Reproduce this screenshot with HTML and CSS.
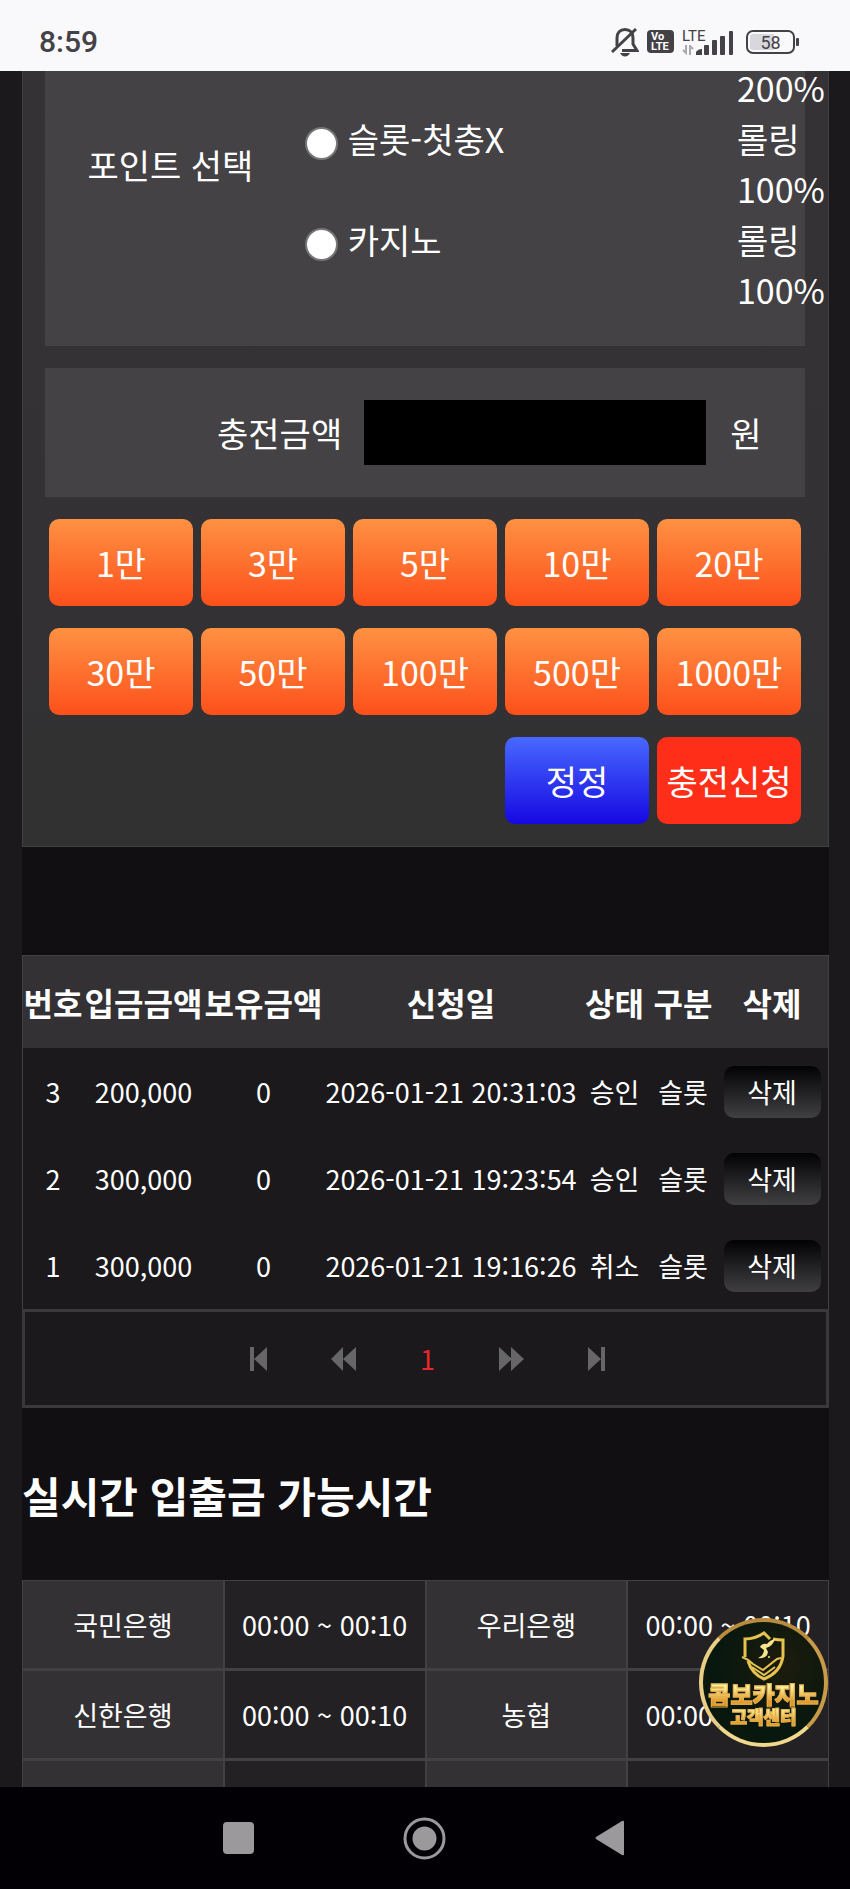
FILE: index.html
```
<!DOCTYPE html>
<html lang="ko">
<head>
    <meta charset="UTF-8">
    <meta name="viewport" content="width=device-width, initial-scale=1.0">
    <title>충전신청</title>
    <link rel="stylesheet" href="styles.css">
</head>
<body>
    <header class="status-bar">
        <div class="clock">8:59</div>
        <div class="status-icons">
            <svg class="icon-bell" width="28" height="30" viewBox="0 0 28 30" fill="none" stroke="#444246" stroke-width="3">
                <path d="M6 19V11C6 6 9 2.500 14 2.500S22 6 22 11V17L26 23.500H11"/>
                <path d="M1 25L25 2"/>
                <path d="M9 26H19Q17 29.500 14 29.500T9 26Z" fill="#444246" stroke="none"/>
            </svg>
            <div class="volte"><span>Vo</span><span>LTE</span></div>
            <div class="signal">
                <div class="signal-type">
                    <span>LTE</span>
                    <svg width="12" height="10" viewBox="0 0 12 10" fill="none" stroke="#aaa8ac" stroke-width="2">
                        <path d="M4 0V8L1 5M8 10V1L11 4"/>
                    </svg>
                </div>
                <svg width="38" height="24" viewBox="0 0 38 24" fill="#444246">
                    <path d="M0 24V21Q2 18 6 18V24Z"/>
                    <rect x="8" y="14" width="5" height="10" rx="1"/>
                    <rect x="16" y="9" width="5" height="15" rx="1"/>
                    <rect x="24" y="5" width="5" height="19" rx="1"/>
                    <rect x="33" y="0" width="4" height="24" rx="1"/>
                </svg>
            </div>
            <div class="battery"><span>58</span></div>
        </div>
    </header>

    <main>
        <div class="container">
            <form class="charge-form">
                <fieldset class="panel point-panel">
                    <div class="point-label">포인트 선택</div>
                    <div class="point-list">
                        <div class="point-row"><span class="rate">200%</span></div>
                        <div class="point-row">
                            <label><input type="radio" name="point">슬롯-첫충X</label>
                            <span class="rate">롤링 100%</span>
                        </div>
                        <div class="point-row">
                            <label><input type="radio" name="point">카지노</label>
                            <span class="rate">롤링 100%</span>
                        </div>
                    </div>
                </fieldset>

                <div class="panel amount-panel">
                    <label for="amount">충전금액</label>
                    <input type="text" id="amount" inputmode="numeric">
                    <span>원</span>
                </div>

                <div class="amount-buttons">
                    <button type="button" class="btn" data-amount="10000">1만</button>
                    <button type="button" class="btn" data-amount="30000">3만</button>
                    <button type="button" class="btn" data-amount="50000">5만</button>
                    <button type="button" class="btn" data-amount="100000">10만</button>
                    <button type="button" class="btn" data-amount="200000">20만</button>
                    <button type="button" class="btn" data-amount="300000">30만</button>
                    <button type="button" class="btn" data-amount="500000">50만</button>
                    <button type="button" class="btn" data-amount="1000000">100만</button>
                    <button type="button" class="btn" data-amount="5000000">500만</button>
                    <button type="button" class="btn" data-amount="10000000">1000만</button>
                    <button type="reset" class="btn btn-reset">정정</button>
                    <button type="button" class="btn btn-submit">충전신청</button>
                </div>
            </form>

            <table class="history">
                <thead>
                    <tr>
                        <th class="col-no">번호</th>
                        <th class="col-amount">입금금액</th>
                        <th class="col-balance">보유금액</th>
                        <th class="col-date">신청일</th>
                        <th class="col-state">상태</th>
                        <th class="col-kind">구분</th>
                        <th class="col-delete">삭제</th>
                    </tr>
                </thead>
                <tbody>
                    <tr>
                        <td>3</td><td>200,000</td><td>0</td><td>2026-01-21 20:31:03</td><td>승인</td><td>슬롯</td>
                        <td><button type="button" class="btn-delete">삭제</button></td>
                    </tr>
                    <tr>
                        <td>2</td><td>300,000</td><td>0</td><td>2026-01-21 19:23:54</td><td>승인</td><td>슬롯</td>
                        <td><button type="button" class="btn-delete">삭제</button></td>
                    </tr>
                    <tr>
                        <td>1</td><td>300,000</td><td>0</td><td>2026-01-21 19:16:26</td><td>취소</td><td>슬롯</td>
                        <td><button type="button" class="btn-delete">삭제</button></td>
                    </tr>
                </tbody>
            </table>

            <nav class="pager">
                <a href="#" aria-label="처음"><svg width="17" height="24" viewBox="0 0 17 24"><path d="M0 0H4V24H0ZM17 0V24L4 12Z"/></svg></a>
                <a href="#" aria-label="이전"><svg width="25" height="24" viewBox="0 0 25 24"><path d="M12 0V24L0 12ZM25 0V24L12 12Z"/></svg></a>
                <a href="#" class="current">1</a>
                <a href="#" aria-label="다음"><svg width="25" height="24" viewBox="0 0 25 24"><path d="M0 0V24L13 12ZM12 0V24L25 12Z"/></svg></a>
                <a href="#" aria-label="마지막"><svg width="17" height="24" viewBox="0 0 17 24"><path d="M0 0V24L13 12ZM13 0H17V24H13Z"/></svg></a>
            </nav>

            <h2>실시간 입출금 가능시간</h2>

            <table class="banks">
                <tbody>
                    <tr><th>국민은행</th><td>00:00 ~ 00:10</td><th>우리은행</th><td>00:00 ~ 00:10</td></tr>
                    <tr><th>신한은행</th><td>00:00 ~ 00:10</td><th>농협</th><td>00:00 ~ 00:10</td></tr>
                    <tr><th></th><td></td><th></th><td></td></tr>
                </tbody>
            </table>
        </div>
    </main>

    <a href="#" class="support">
        <svg width="46" height="52" viewBox="0 0 46 52" fill="none" stroke="#e6c34f" stroke-width="3">
            <path d="M29 9L23 3Q14 9 4 9V27M32 9Q37 10 42 10V26Q40 42 23 49Q11 44 7 31"/>
            <path d="M1 27Q7 29 12 34L22 40L36 29L40 28M11 37L23 45L34 37" stroke-width="2"/>
            <path d="M34 9Q29 10 26 14Q21 13 19 17L23 20Q23 25 17 28Q26 29 27 22L25 18Q32 16 34 9Z" fill="#f4e58b" stroke="none"/>
            <circle cx="28" cy="27" r="1" fill="#f4e58b" stroke="none"/>
        </svg>
        <strong>콤보카지노</strong>
        <span>고객센터</span>
    </a>

    <nav class="system-nav">
        <button type="button" aria-label="최근 앱"><svg width="31" height="32" viewBox="0 0 31 32"><rect width="31" height="32" rx="4" fill="#9b999c"/></svg></button>
        <button type="button" aria-label="홈">
            <svg width="43" height="43" viewBox="0 0 43 43">
                <circle cx="21.500" cy="21.500" r="19.500" fill="none" stroke="#9b999c" stroke-width="3"/>
                <circle cx="21.500" cy="21.500" r="12" fill="#9b999c"/>
            </svg>
        </button>
        <button type="button" aria-label="뒤로"><svg width="29" height="36" viewBox="0 0 29 36"><path d="M27 1Q29 0 29 2V34Q29 36 27 35L1 19Q0 18 1 17Z" fill="#9b999c"/></svg></button>
    </nav>

    <script>
        const amount = document.getElementById('amount');

        document.querySelectorAll('.amount-buttons [data-amount]').forEach(button => {
            button.addEventListener('click', () => {
                const total = Number(amount.value.replace(/,/g, '')) + Number(button.dataset.amount);
                amount.value = total.toLocaleString();
            });
        });
    </script>
</body>
</html>
```
FILE: styles.css
```
* {
    box-sizing: border-box;
}
body {
    font-family: "Noto Sans CJK KR", sans-serif;
    margin: 0;
    height: 100vh;
    display: flex;
    flex-direction: column;
    background-color: #1b191c;
    color: #fff;
    font-size: 27px;
    line-height: 40px;
}
button, input {
    font: inherit;
    color: inherit;
    border: none;
    margin: 0;
    padding: 0;
}
button {
    cursor: pointer;
}
a {
    color: inherit;
    text-decoration: none;
}

/* status bar */
.status-bar {
    flex: none;
    height: 71px;
    padding: 12px 55px 0 39px;
    display: flex;
    justify-content: space-between;
    align-items: center;
    background-color: #f9f8fb;
    color: #444246;
    font-family: Roboto, sans-serif;
}
.clock {
    font-size: 30px;
    font-weight: 500;
}
.status-icons {
    display: flex;
    align-items: center;
    gap: 8px;
}
.volte {
    width: 27px;
    height: 23px;
    display: flex;
    flex-direction: column;
    justify-content: center;
    border-radius: 4px;
    background-color: #444246;
    color: #fff;
    font-size: 11px;
    font-weight: 700;
    line-height: 10px;
    padding-left: 4px;
}
.signal {
    display: flex;
    align-items: flex-end;
    height: 26px;
    padding-right: 4px;
}
.signal-type {
    width: 14px;
    height: 26px;
    display: flex;
    flex-direction: column;
    justify-content: space-between;
    font-size: 15px;
    line-height: 15px;
}
.battery {
    position: relative;
    width: 49px;
    height: 24px;
    border: 2px solid #444246;
    border-radius: 7px;
    background: linear-gradient(to right, #d8d7de 58%, #f9f8fb 58%);
    background-clip: content-box;
    padding: 2px;
    text-align: center;
    font-size: 18px;
    line-height: 17px;
}
.battery::after {
    content: "";
    position: absolute;
    right: -6px;
    top: 6px;
    width: 3px;
    height: 8px;
    border-radius: 1px;
    background-color: #444246;
}

/* page */
main {
    flex: 1;
    min-height: 0;
    overflow: hidden;
    padding: 0 21px 0 22px;
}
.container {
    background-color: #110f12;
    /* the list is scrolled a little under the status bar */
    margin-top: -8px;
}
.charge-form {
    background: linear-gradient(#353236, #323132);
    border: 1px solid #414043;
    border-top: none;
    padding: 0 23px 22px 22px;
    margin-bottom: 108px;
    font-size: 34px;
    line-height: 50px;
}
.panel {
    background-color: #444245;
    border: none;
    margin: 0 0 22px;
}
.point-panel {
    display: grid;
    grid-template-columns: 33% 1fr;
    padding: 0 0 31px;
}
.point-label {
    padding-top: 77px;
    text-align: center;
}
.point-list {
    display: grid;
    gap: 1px;
}
.point-row {
    display: flex;
    justify-content: flex-end;
}
.point-row label {
    flex: 1;
    display: flex;
    align-items: center;
    align-self: flex-start;
    gap: 10px;
    padding-left: 9px;
}
.point-row input {
    appearance: none;
    width: 33px;
    height: 33px;
    margin-top: 9px;
    border: 2px solid #767578;
    border-radius: 50%;
    background-color: #fff;
}
.point-row input:checked {
    border: 10px solid #1f6feb;
}
.rate {
    width: 68px;
}
.amount-panel {
    display: grid;
    grid-template-columns: 42% 1fr 13%;
    align-items: center;
    padding: 32px 0;
}
.amount-panel label {
    padding-right: 22px;
    text-align: right;
}
.amount-panel input {
    width: 100%;
    height: 65px;
    padding: 0 12px;
    background-color: #000;
    text-align: right;
}
.amount-panel span {
    padding-left: 24px;
}
.amount-buttons {
    display: grid;
    grid-template-columns: repeat(5, 1fr);
    gap: 22px 8px;
    padding: 0 4px;
}
.btn {
    height: 87px;
    border-radius: 10px;
    background-image: linear-gradient(#ff9143, #fd501b);
    white-space: nowrap;
}
.btn-reset {
    grid-column: 4;
    background-image: linear-gradient(#4869ff, #1608e2);
}
.btn-submit {
    background: #ff2e18;
}

/* deposit history */
table {
    width: 100%;
    table-layout: fixed;
    border-spacing: 0;
    text-align: center;
}
th, td {
    padding: 0;
    white-space: nowrap;
}
.history {
    border: 1px solid #414043;
    border-bottom: none;
    background-color: #1b191c;
}
.history th {
    height: 92px;
    background-color: #333134;
    font-size: 32px;
}
.history td {
    height: 87px;
}
.col-no { width: 60px; }
.col-amount { width: 121px; }
.col-balance { width: 119px; }
.col-date { width: 256px; }
.col-state { width: 71px; }
.col-kind { width: 66px; }
.col-delete { width: 112px; }
.btn-delete {
    width: 97px;
    height: 52px;
    border-radius: 10px;
    background-image: linear-gradient(#020103, #403f42);
}
.pager {
    height: 99px;
    display: flex;
    justify-content: center;
    align-items: center;
    gap: 64px;
    padding-left: 4px;
    border: 3px solid #39383b;
    background-color: #1b191c;
}
.pager a {
    display: flex;
}
.pager svg {
    fill: #666568;
}
.pager .current {
    color: #e5282b;
}

/* bank hours */
h2 {
    margin: 0;
    padding: 56px 0 54px;
    font-size: 42px;
    line-height: 62px;
}
.banks th, .banks td {
    height: 90px;
    border: 1px solid #414043;
    border-bottom-width: 2px;
    background-color: #232124;
}
.banks th {
    background-color: #333134;
    font-weight: 400;
}

/* floating support badge */
.support {
    position: fixed;
    right: 22px;
    bottom: 142px;
    width: 129px;
    height: 129px;
    display: flex;
    flex-direction: column;
    align-items: center;
    padding-top: 8px;
    border: 4px solid #d9b65c;
    border-color: #b98b3c #c79b48 #f0d88c #e9cf86;
    border-radius: 50%;
    background: radial-gradient(circle at 65% 35%, #1d1c0c, #07170f 60%, #101a08);
    white-space: nowrap;
}
.support svg {
    flex: none;
}
.support strong, .support span {
    background-image: linear-gradient(#fff0a0 20%, #e09a2c 80%);
    background-clip: text;
    color: transparent;
    font-weight: 900;
    -webkit-text-stroke: 1px #e6b04a;
}
.support strong {
    font-size: 24px;
    line-height: 24px;
}
.support span {
    font-size: 18px;
    line-height: 20px;
}

/* android navigation */
.system-nav {
    flex: none;
    height: 102px;
    display: flex;
    justify-content: center;
    align-items: center;
    gap: 149px;
    padding-right: 4px;
    background-color: #020004;
}
.system-nav button {
    display: flex;
    background: none;
}
```
